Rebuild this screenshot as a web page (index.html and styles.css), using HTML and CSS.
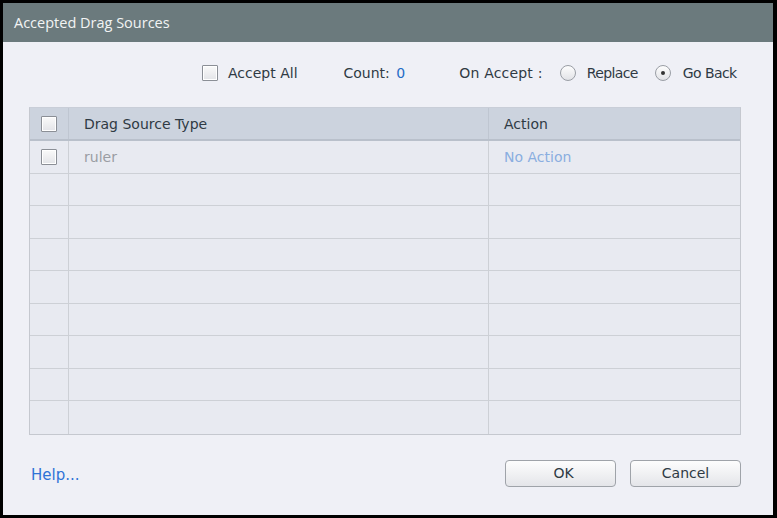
FILE: index.html
```html
<!DOCTYPE html>
<html>
<head>
<meta charset="utf-8">
<link rel="stylesheet" href="styles.css">
</head>
<body>
<div class="frame">
  <div class="window">
    <div class="titlebar">Accepted Drag Sources</div>
    <div class="content">
      <div class="toolbar">
        <span class="check"></span>
        <span class="lbl accept">Accept All</span>
        <span class="lbl count">Count: <span class="blue">0</span></span>
        <span class="lbl onaccept">On Accept :</span>
        <span class="radio"></span>
        <span class="lbl replace">Replace</span>
        <span class="radio on"><span class="dot"></span></span>
        <span class="lbl goback">Go Back</span>
      </div>
      <div class="table">
        <div class="row head">
          <div class="c1"><span class="check"></span></div>
          <div class="c2">Drag Source Type</div>
          <div class="c3">Action</div>
        </div>
        <div class="row">
          <div class="c1"><span class="check"></span></div>
          <div class="c2 grey">ruler</div>
          <div class="c3 lightblue">No Action</div>
        </div>
        <div class="row"><div class="c1"></div><div class="c2"></div><div class="c3"></div></div>
        <div class="row"><div class="c1"></div><div class="c2"></div><div class="c3"></div></div>
        <div class="row"><div class="c1"></div><div class="c2"></div><div class="c3"></div></div>
        <div class="row"><div class="c1"></div><div class="c2"></div><div class="c3"></div></div>
        <div class="row"><div class="c1"></div><div class="c2"></div><div class="c3"></div></div>
        <div class="row"><div class="c1"></div><div class="c2"></div><div class="c3"></div></div>
        <div class="row"><div class="c1"></div><div class="c2"></div><div class="c3"></div></div>
        <div class="row last"><div class="c1"></div><div class="c2"></div><div class="c3"></div></div>
      </div>
      <div class="footer">
        <span class="help">Help...</span>
        <div class="buttons">
          <span class="btn ok">OK</span>
          <span class="btn">Cancel</span>
        </div>
      </div>
    </div>
  </div>
</div>
</body>
</html>
```
FILE: styles.css
```css
* { box-sizing: border-box; }
html, body { margin: 0; padding: 0; }
body { width: 777px; height: 518px; background: #000; overflow: hidden; }
.frame { padding: 3px 4px 3px 3px; height: 518px; }
.window { width: 770px; height: 512px; background: #eff0f6; display: flex; flex-direction: column; }
.titlebar {
  height: 39px; background: #6b7a7d; color: #f2f4f4;
  font-family: "Open Sans", "Noto Sans", sans-serif; font-size: 14.5px;
  line-height: 39px; padding-left: 11px;
}
.content { flex: 1; padding: 0 32px 0 26px; display: flex; flex-direction: column; font-family: "DejaVu Sans", sans-serif; color: #2f3a44; }
.toolbar { height: 21px; margin-top: 20px; display: flex; align-items: center; font-size: 14px; padding-left: 173px; }
.toolbar > * { flex: none; }
.check {
  display: inline-block; width: 16px; height: 16px; border: 1px solid #8b8f96; border-radius: 1px;
  background: linear-gradient(#fafafa, #e3e4e8); box-shadow: inset 0 0 0 1px #fff; flex: none;
}
.lbl { white-space: nowrap; }
.accept { margin-left: 10px; }
.count { margin-left: 46px; }
.blue { color: #1f6cc7; margin-left: 2px; }
.onaccept { margin-left: 54px; letter-spacing: 0.2px; }
.radio {
  display: inline-block; width: 16px; height: 16px; border: 1px solid #9a9ea5; border-radius: 50%;
  background: linear-gradient(#fdfdfd, #e2e3e7); margin-left: 17px; margin-right: 11px;
  position: relative;
}
.radio .dot { position: absolute; left: 5px; top: 5px; width: 4px; height: 4px; border-radius: 50%; background: #333; }
.replace { letter-spacing: -0.6px; }
.radio.on { margin-left: 17px; margin-right: 12px; }
.goback { letter-spacing: -0.6px; }
.table { margin-top: 24px; width: 712px; border: 1px solid #c5c8cf; border-top-color: #c9ced8; background: #e8eaf1; }
.row { display: flex; height: 32.5px; border-bottom: 1px solid #cdd0d6; }
.row.last { border-bottom: none; }
.row.head { height: 33px; background: #ccd3de; border-bottom: 2px solid #b9c0cb; }
.c1 { width: 39px; border-right: 1px solid #cdd0d6; display: flex; align-items: center; justify-content: center; }
.head .c1, .head .c2 { border-right-color: #bfc6d1; }
.c2 { width: 420px; border-right: 1px solid #cdd0d6; padding-left: 15px; display: flex; align-items: center; font-size: 14px; }
.c3 { flex: 1; padding-left: 15px; display: flex; align-items: center; font-size: 14px; }
.grey { color: #9a9da3; }
.lightblue { color: #8aaee0; }
.footer { display: flex; justify-content: space-between; align-items: center; margin-top: 25px; }
.help { color: #2f73d6; font-size: 15px; margin-left: 2px; margin-top: 4px; }
.buttons { display: flex; gap: 14px; }
.btn {
  width: 111px; height: 27px; border: 1px solid #9fa3a9; border-radius: 4px;
  background: linear-gradient(#fdfdfd, #e4e5e9); display: flex; align-items: center; justify-content: center;
  font-size: 14px; color: #2f3a44;
}
.ok { padding-left: 6px; }
```
